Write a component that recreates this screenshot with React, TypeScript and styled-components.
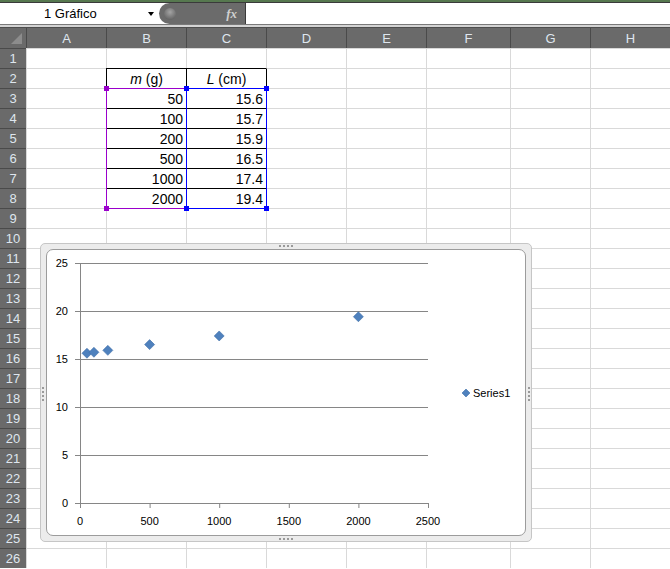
import React from "react";
import styled, { createGlobalStyle } from "styled-components";

const GlobalStyle = createGlobalStyle`
  html, body {
    margin: 0;
    padding: 0;
    background: #fff;
  }
  body {
    font-family: "Liberation Sans", Arial, sans-serif;
    overflow: hidden;
  }
`;

const COLS = ["A", "B", "C", "D", "E", "F", "G", "H"];
const COL_WIDTHS = [80, 80, 80, 80, 80, 84, 80, 80];
const ROW_COUNT = 26;

type Val = { text?: React.ReactNode; align?: "left" | "center" | "right" };

const table: Record<string, Val> = {
  B2: { text: <span><i>m</i> (g)</span>, align: "center" },
  C2: { text: <span><i>L</i> (cm)</span>, align: "center" },
  B3: { text: "50" }, C3: { text: "15.6" },
  B4: { text: "100" }, C4: { text: "15.7" },
  B5: { text: "200" }, C5: { text: "15.9" },
  B6: { text: "500" }, C6: { text: "16.5" },
  B7: { text: "1000" }, C7: { text: "17.4" },
  B8: { text: "2000" }, C8: { text: "19.4" },
};

const inBox = (r: number, c: number) => r >= 2 && r <= 8 && c >= 1 && c <= 2;

const data = [
  [50, 15.6],
  [100, 15.7],
  [200, 15.9],
  [500, 16.5],
  [1000, 17.4],
  [2000, 19.4],
];

const TopStrip = styled.div`
  height: 2px;
  background: #56784f;
  border-bottom: 1px solid #3a3a3a;
`;

const FormulaBar = styled.div`
  display: flex;
  height: 21px;
  background: #fff;
`;

const NameBox = styled.div`
  width: 159px;
  display: flex;
  align-items: center;
  padding-left: 44px;
  box-sizing: border-box;
  font-size: 13px;
  color: #000;
`;

const DropArrow = styled.span`
  margin-left: auto;
  margin-right: 5px;
  width: 0;
  height: 0;
  border-left: 3.5px solid transparent;
  border-right: 3.5px solid transparent;
  border-top: 4px solid #000;
`;

const FxBox = styled.div`
  width: 86px;
  background: #6b6b6b;
  border-radius: 11px 0 0 11px;
  display: flex;
  align-items: center;
  justify-content: space-between;
  padding: 0 8px 0 5px;
  box-sizing: border-box;
`;

const Knob = styled.span`
  width: 12px;
  height: 12px;
  border-radius: 50%;
  background: radial-gradient(circle at 50% 35%, #a4a4a4, #666 75%);
`;

const Fx = styled.span`
  font-family: "Liberation Serif", serif;
  font-style: italic;
  font-weight: bold;
  font-size: 13px;
  color: #d0d0d0;
`;

const FormulaInput = styled.div`
  flex: 1;
  border-left: 1px solid #3a3a3a;
  background: #fff;
`;

const Divider = styled.div`
  height: 2px;
  background: #d4d4d4;
  border-top: 1px solid #7a7a7a;
  border-bottom: 1px solid #4e4e4e;
`;

const Sheet = styled.div`
  position: relative;
  display: grid;
  grid-template-columns: 26px ${COL_WIDTHS.map((w) => `${w}px`).join(" ")};
  grid-auto-rows: 20px;
  width: 670px;
`;

const Corner = styled.div`
  background: #6a6a6a;
  position: relative;
  &::after {
    content: "";
    position: absolute;
    right: 4px;
    bottom: 4px;
    border-left: 11px solid transparent;
    border-bottom: 11px solid #8c8c8c;
  }
`;

const ColHead = styled.div`
  background: #6a6a6a;
  border-left: 1px solid #4a4a4a;
  color: #dfe6ee;
  font-size: 13px;
  display: flex;
  align-items: center;
  justify-content: center;
`;

const RowHead = styled.div`
  background: #6a6a6a;
  border-top: 1px solid #4a4a4a;
  color: #dfe6ee;
  font-size: 13px;
  display: flex;
  align-items: center;
  justify-content: center;
`;

const Cell = styled.div<{ $leftDark: boolean; $topDark: boolean; $align: string }>`
  border-left: 1px solid ${(p) => (p.$leftDark ? "#000" : "#d9d9d9")};
  border-top: 1px solid ${(p) => (p.$topDark ? "#000" : "#d9d9d9")};
  font-size: 14px;
  color: #000;
  display: flex;
  align-items: center;
  justify-content: ${(p) =>
    p.$align === "center" ? "center" : p.$align === "left" ? "flex-start" : "flex-end"};
  padding: 0 3px;
  white-space: pre;
  overflow: hidden;
`;

const Range = styled.div<{ $x: number; $y: number; $w: number; $h: number; $color: string }>`
  position: absolute;
  left: ${(p) => p.$x}px;
  top: ${(p) => p.$y}px;
  width: ${(p) => p.$w + 1}px;
  height: ${(p) => p.$h + 1}px;
  border: 1px solid ${(p) => p.$color};
  box-sizing: border-box;
  pointer-events: none;
`;

const Handle = styled.span<{ $color: string; $right?: boolean; $bottom?: boolean }>`
  position: absolute;
  width: 5px;
  height: 5px;
  background: ${(p) => p.$color};
  ${(p) => (p.$right ? "right: -3px;" : "left: -3px;")}
  ${(p) => (p.$bottom ? "bottom: -3px;" : "top: -3px;")}
`;

const ChartFrame = styled.div`
  position: absolute;
  left: 40px;
  top: 215px;
  width: 492px;
  height: 299px;
  box-sizing: border-box;
  background: #ececec;
  border: 1px solid #c6c6c6;
  border-radius: 5px;
  padding: 5px;
`;

const ChartArea = styled.div`
  width: 100%;
  height: 100%;
  box-sizing: border-box;
  background: #fff;
  border: 1px solid #9c9c9c;
  border-radius: 7px;
  overflow: hidden;
`;

const Grip = styled.span<{ $side: "top" | "bottom" | "left" | "right" }>`
  position: absolute;
  ${(p) =>
    p.$side === "top" || p.$side === "bottom"
      ? `left: 238px; width: 14px; height: 2px; ${p.$side}: 1px;
         background: repeating-linear-gradient(90deg, #9a9a9a 0 2px, transparent 2px 4px);`
      : `top: 143px; height: 14px; width: 2px; ${p.$side}: 1px;
         background: repeating-linear-gradient(180deg, #9a9a9a 0 2px, transparent 2px 4px);`}
`;

const X0 = 33;
const Y0 = 253;
const xs = (v: number) => X0 + v * (348 / 2500);
const ys = (v: number) => Y0 - v * 9.6;

const Diamond = ({ cx, cy, r = 5 }: { cx: number; cy: number; r?: number }) => (
  <polygon
    points={`${cx},${cy - r} ${cx + r},${cy} ${cx},${cy + r} ${cx - r},${cy}`}
    fill="#4f81bd"
    stroke="#3f6fa8"
    strokeWidth={0.6}
  />
);

const ScatterChart = () => {
  const yTicks = [0, 5, 10, 15, 20, 25];
  const xTicks = [0, 500, 1000, 1500, 2000, 2500];
  return (
    <svg width="478" height="285" viewBox="0 0 478 285" fontFamily="Liberation Sans, Arial, sans-serif" fontSize="11">
      {yTicks.map((t) => (
        <g key={`y${t}`}>
          <line x1={X0 - 5} x2={xs(2500)} y1={ys(t) + 0.5} y2={ys(t) + 0.5} stroke="#868686" />
          <text x={21} y={ys(t) + 4} textAnchor="end" fill="#000">
            {t}
          </text>
        </g>
      ))}
      <line x1={X0 + 0.5} x2={X0 + 0.5} y1={ys(25)} y2={Y0 + 5} stroke="#868686" />
      {xTicks.map((t) => (
        <g key={`x${t}`}>
          <line x1={xs(t) + 0.5} x2={xs(t) + 0.5} y1={Y0} y2={Y0 + 5} stroke="#868686" />
          <text x={xs(t)} y={Y0 + 22} textAnchor="middle" fill="#000">
            {t}
          </text>
        </g>
      ))}
      {data.map(([x, y]) => (
        <Diamond key={x} cx={xs(x)} cy={ys(y)} />
      ))}
      <Diamond cx={419} cy={143} r={4} />
      <text x={426} y={147} fill="#000">
        Series1
      </text>
    </svg>
  );
};

const App = () => {
  const rows = Array.from({ length: ROW_COUNT }, (_, i) => i + 1);
  return (
    <>
      <GlobalStyle />
      <TopStrip />
      <FormulaBar>
        <NameBox>
          1 Gráfico
          <DropArrow />
        </NameBox>
        <FxBox>
          <Knob />
          <Fx>fx</Fx>
        </FxBox>
        <FormulaInput />
      </FormulaBar>
      <Divider />
      <Sheet>
        <Corner />
        {COLS.map((c) => (
          <ColHead key={c}>{c}</ColHead>
        ))}
        {rows.map((r) => (
          <React.Fragment key={r}>
            <RowHead>{r}</RowHead>
            {COLS.map((c, ci) => {
              const v = table[`${c}${r}`];
              return (
                <Cell
                  key={c}
                  $leftDark={inBox(r, ci) || inBox(r, ci - 1)}
                  $topDark={inBox(r, ci) || inBox(r - 1, ci)}
                  $align={v?.align ?? "right"}
                >
                  {v?.text}
                </Cell>
              );
            })}
          </React.Fragment>
        ))}

        <Range $x={106} $y={60} $w={80} $h={120} $color="#9a00cc">
          <Handle $color="#9a00cc" />
          <Handle $color="#9a00cc" $right />
          <Handle $color="#9a00cc" $bottom />
          <Handle $color="#9a00cc" $right $bottom />
        </Range>
        <Range $x={186} $y={60} $w={80} $h={120} $color="#0000ff">
          <Handle $color="#0000ff" />
          <Handle $color="#0000ff" $right />
          <Handle $color="#0000ff" $bottom />
          <Handle $color="#0000ff" $right $bottom />
        </Range>

        <ChartFrame>
          <Grip $side="top" />
          <Grip $side="bottom" />
          <Grip $side="left" />
          <Grip $side="right" />
          <ChartArea>
            <ScatterChart />
          </ChartArea>
        </ChartFrame>
      </Sheet>
    </>
  );
};

export default App;
